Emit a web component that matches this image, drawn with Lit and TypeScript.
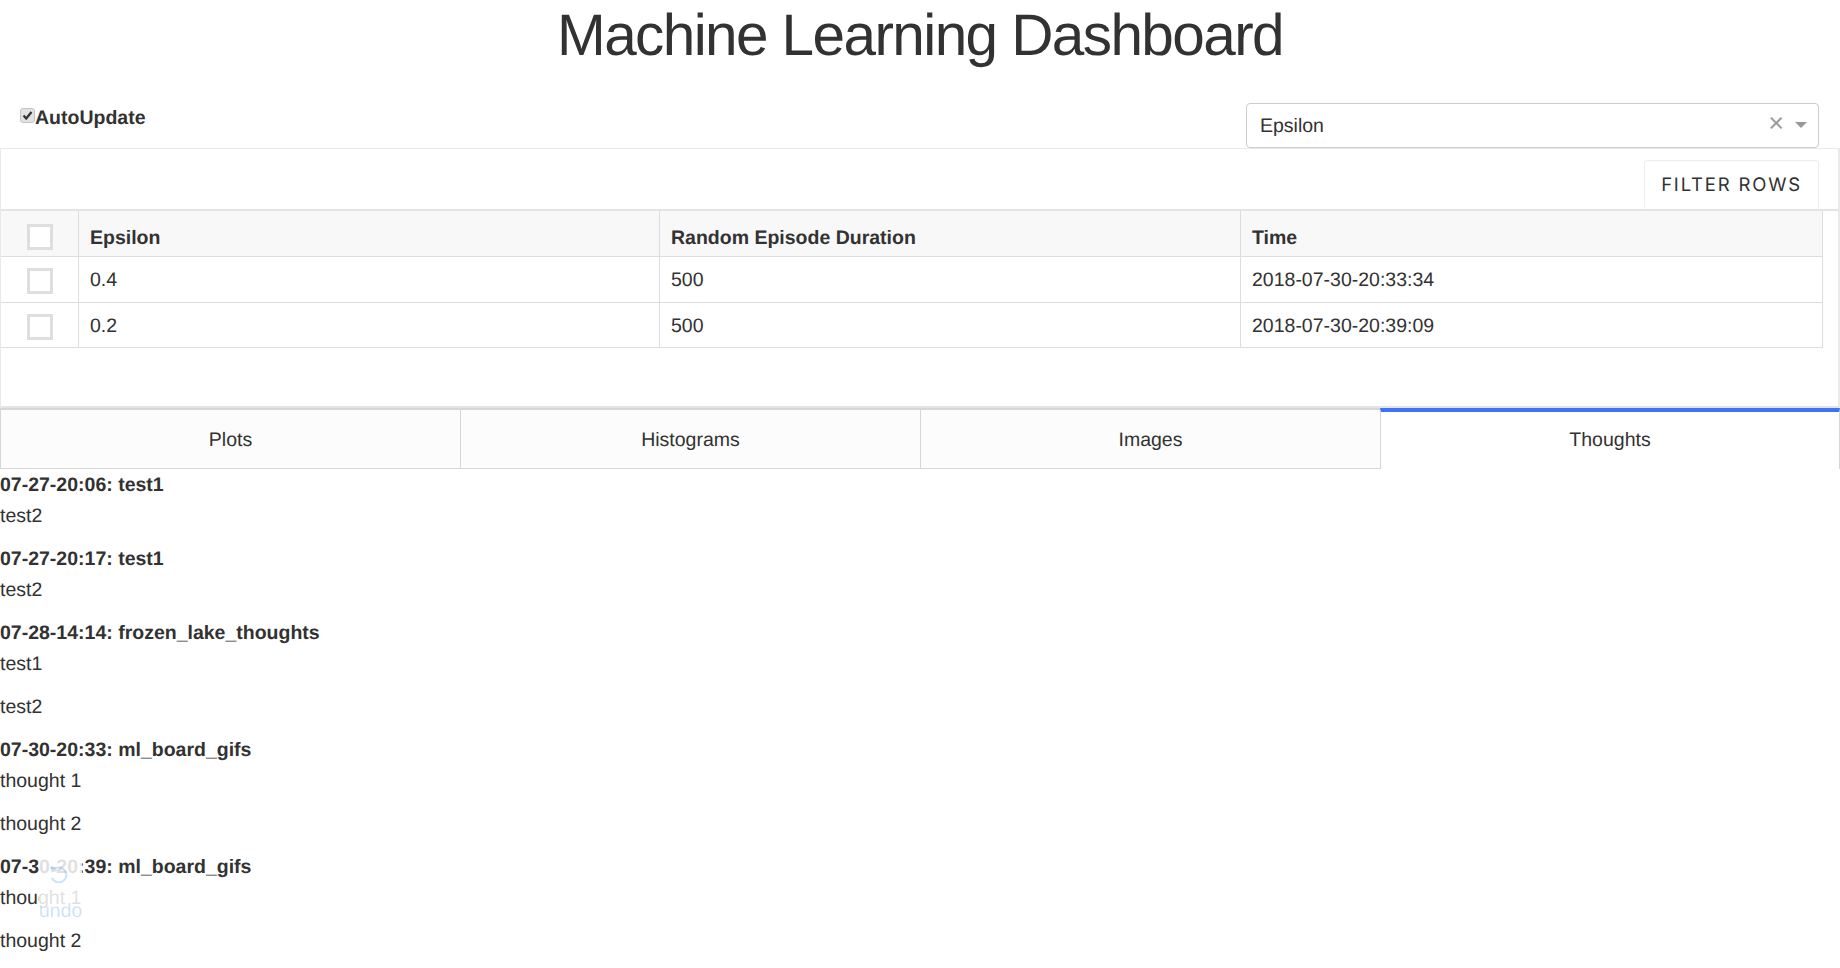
import { LitElement, html, css } from "lit";
import { customElement } from "lit/decorators.js";

const rows = [
  ["0.4", "500", "2018-07-30-20:33:34"],
  ["0.2", "500", "2018-07-30-20:39:09"],
];
const thoughts: [string, string[]][] = [
  ["07-27-20:06: test1", ["test2"]],
  ["07-27-20:17: test1", ["test2"]],
  ["07-28-14:14: frozen_lake_thoughts", ["test1", "test2"]],
  ["07-30-20:33: ml_board_gifs", ["thought 1", "thought 2"]],
  ["07-30-20:39: ml_board_gifs", ["thought 1", "thought 2"]],
];
const tabs = ["Plots", "Histograms", "Images", "Thoughts"];

@customElement("app-root")
export class AppRoot extends LitElement {
  static styles = css`
    :host {
      display: block;
      font-family: "Liberation Sans", Arial, sans-serif;
      font-size: 19.5px;
      line-height: 30.6px;
      color: #323232;
      background: #fff;
      text-rendering: geometricPrecision;
    }
    h1 {
      margin: 0;
      height: 70px;
      text-align: center;
      font-size: 58.5px;
      line-height: 72px;
      font-weight: 400;
      letter-spacing: -1.6px;
    }
    .controls {
      display: flex;
      justify-content: space-between;
      align-items: flex-start;
      height: 78px;
      padding: 33px 21px 0 20px;
      box-sizing: border-box;
    }
    .auto {
      display: flex;
      align-items: center;
      font-weight: 700;
      height: 30px;
    }
    .check {
      width: 15px;
      height: 15px;
      box-sizing: border-box;
      border: 1px solid #c4c4c4;
      border-radius: 3px;
      background: #e2e2e2;
      display: flex;
      align-items: center;
      justify-content: center;
      margin-top: -5px;
    }
    .select {
      width: 573px;
      height: 45px;
      box-sizing: border-box;
      border: 1px solid #ccc;
      border-radius: 4px;
      display: flex;
      align-items: center;
      padding: 0 11px 0 13px;
      background: #fff;
    }
    .select .value { flex: 1; padding-top: 2px; }
    .select .clear {
      color: #999;
      font-size: 27px;
      line-height: 1;
      margin-right: 11px;
      margin-bottom: 4px;
    }
    .select .arrow {
      width: 0;
      height: 0;
      border: 6.5px solid transparent;
      border-top-color: #999;
      border-bottom-width: 0;
      margin-bottom: 2px;
    }
    .frame {
      height: 260px;
      box-sizing: border-box;
      border: 1px solid #e9e9e9;
      border-bottom: 2px solid #e4e4e4;
      border-right-width: 2px;
    }
    .tools {
      display: flex;
      justify-content: flex-end;
      height: 62px;
      padding: 11px 19px 0 0;
      box-sizing: border-box;
      border-bottom: 2px solid #e4e4e4;
    }
    .filter {
      width: 175px;
      height: 49px;
      box-sizing: border-box;
      border: 1px solid #ededed;
      border-bottom: 0;
      border-radius: 4px;
      background: #fff;
      color: #323232;
      font-family: Inter, "Liberation Sans", sans-serif;
      font-size: 18.5px;
      letter-spacing: 1.8px;
      padding: 0;
      text-rendering: geometricPrecision;
    }
    .grid {
      display: grid;
      grid-template-columns: 78px 581px 581px 582px;
      width: 1822px;
    }
    .cell {
      height: 46px;
      box-sizing: border-box;
      border-bottom: 1px solid #ddd;
      border-right: 1px solid #ddd;
      padding: 2px 10px 0 11px;
      display: flex;
      align-items: center;
    }
    .cell.last { height: 45px; }
    .head { background: #f8f8f8; font-weight: 700; padding-top: 10px; }
    .cell.box-cell { justify-content: center; padding: 3px 0 0; }
    .cell.box-cell.last { padding-top: 4px; }
    .cell.head.box-cell { padding: 6px 0 0; }
    .box {
      width: 26px;
      height: 26px;
      box-sizing: border-box;
      border: 3px solid #dedede;
      background: #fff;
    }
    .tabs { display: grid; grid-template-columns: repeat(4, 1fr); height: 61px; }
    .tab {
      box-sizing: border-box;
      height: 61px;
      border-left: 1px solid #d6d6d6;
      border-top: 2px solid #d6d6d6;
      border-bottom: 1px solid #d6d6d6;
      background: #fcfcfc;
      display: flex;
      align-items: center;
      justify-content: center;
      padding-top: 3px;
    }
    .tab.active {
      background: #fff;
      border-top: 4px solid #3f73f5;
      border-bottom: 0;
      border-right: 1px solid #d6d6d6;
      padding: 0 0 1px;
    }
    .thoughts { padding-top: 1.3px; }
    .t-title { font-weight: 700; }
    .thoughts p { margin: 0 0 12.7px; }
    .undo {
      position: fixed;
      left: 39px;
      top: 858px;
      width: 43px;
      height: 62px;
      background: rgba(255, 255, 255, 0.85);
      text-align: center;
      font-size: 19.5px;
      z-index: 10;
    }
    .undo-link {
      opacity: 0.2;
      color: #0074d9;
      padding-top: 6px;
    }
    .undo-link svg { display: block; margin: 0 0 17px 11px; }
    .undo-link div { line-height: 22px; }
  `;

  render() {
    return html`
      <h1>Machine Learning Dashboard</h1>
      <div class="controls">
        <label class="auto">
          <span class="check">
            <svg width="11" height="11" viewBox="0 0 11 11">
              <path d="M1.5 5.5 L4.2 8.5 L9.5 2" fill="none" stroke="#333" stroke-width="2.2" />
            </svg>
          </span>
          AutoUpdate
        </label>
        <div class="select">
          <span class="value">Epsilon</span>
          <span class="clear">×</span>
          <span class="arrow"></span>
        </div>
      </div>
      <div class="frame">
        <div class="tools"><button class="filter">FILTER ROWS</button></div>
        <div class="grid">
          <div class="cell head box-cell"><span class="box"></span></div>
          <div class="cell head">Epsilon</div>
          <div class="cell head">Random Episode Duration</div>
          <div class="cell head">Time</div>
          ${rows.map((r, i) => {
            const last = i === rows.length - 1 ? "last" : "";
            return html`
              <div class="cell box-cell ${last}"><span class="box"></span></div>
              ${r.map((c) => html`<div class="cell ${last}">${c}</div>`)}
            `;
          })}
        </div>
      </div>
      <div class="tabs">
        ${tabs.map(
          (t) => html`<div class="tab ${t === "Thoughts" ? "active" : ""}">${t}</div>`
        )}
      </div>
      <div class="thoughts">
        ${thoughts.map(
          ([t, ps]) => html`
            <div class="t-title">${t}</div>
            ${ps.map((p) => html`<p>${p}</p>`)}
          `
        )}
      </div>
      <div class="undo">
        <div class="undo-link">
          <svg width="18" height="19" viewBox="0 0 18 19" fill="none" stroke="currentColor" stroke-width="2">
            <path d="M5 4.5 A7.5 7.5 0 1 1 2 14" />
            <path d="M0.5 1.5 L1.5 8.5 L8 6.5 Z" fill="currentColor" stroke="none" />
          </svg>
          <div>undo</div>
        </div>
      </div>
    `;
  }
}
